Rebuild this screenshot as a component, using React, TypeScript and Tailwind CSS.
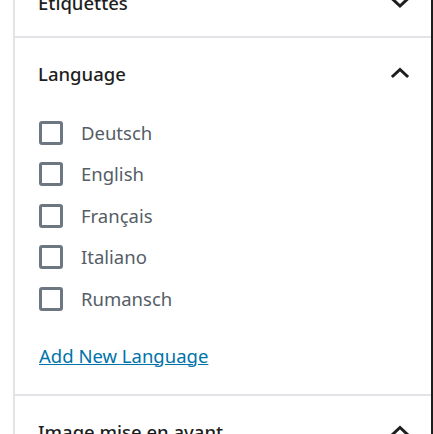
import React, { useState } from 'react';

const font = { fontFamily: '"Noto Sans", "Open Sans", sans-serif' };

const Chevron = ({ up }: { up: boolean }) => (
  <svg width="36" height="36" viewBox="0 0 24 24" fill="none" className="shrink-0 stroke-[#1e1e1e]">
    {up ? (
      <polyline points="6.6,14 12,9 17.4,14" strokeWidth="2" />
    ) : (
      <polyline points="6.6,9 12,14 17.4,9" strokeWidth="2" />
    )}
  </svg>
);

const PanelTitle = ({ title, open, shift = false }: { title: string; open: boolean; shift?: boolean }) => (
  <button
    className={`w-full h-[72px] flex items-center justify-between pl-[23px] pr-[13px] text-left ${shift ? 'pt-[6px]' : ''}`}
  >
    <span className="text-[18.5px] leading-[28px] font-medium text-[#1e1e1e]">{title}</span>
    <Chevron up={open} />
  </button>
);

const languages = ['Deutsch', 'English', 'Français', 'Italiano', 'Rumansch'];

export default function App() {
  const [checked, setChecked] = useState<string[]>([]);

  const toggle = (lang: string) =>
    setChecked(c => (c.includes(lang) ? c.filter(l => l !== lang) : [...c, lang]));

  return (
    <div className="w-[433px] h-[434px] overflow-hidden bg-white" style={font}>
      <div className="ml-[13px] border-l-2 border-r-2 border-l-[#e2e4e7] border-r-[#1e1e1e] min-h-[434px]">
        {/* Étiquettes (collapsed, scrolled off the top) */}
        <div className="-mt-[36px]">
          <PanelTitle title="Étiquettes" open={false} shift />
        </div>

        {/* Language */}
        <div className="border-t-2 border-[#e2e4e7]">
          <PanelTitle title="Language" open={true} />
          <div className="pl-[24px] pr-[13px] pt-[2px] pb-6">
            {languages.map(lang => (
              <label key={lang} className="h-[41.5px] flex items-center cursor-pointer">
                <input
                  type="checkbox"
                  checked={checked.includes(lang)}
                  onChange={() => toggle(lang)}
                  className="appearance-none w-[24px] h-[24px] border-[3px] border-[#6c7781] rounded-[3px] mr-[18px] shrink-0"
                />
                <span className="text-[18.5px] leading-[28px] text-[#555d66]">{lang}</span>
              </label>
            ))}
            <div className="mt-[22px]">
              <a href="#" className="text-[18.5px] leading-[28px] text-[#0073aa] underline">
                Add New Language
              </a>
            </div>
          </div>
        </div>

        {/* Image mise en avant */}
        <div className="border-t-2 border-[#e2e4e7]">
          <PanelTitle title="Image mise en avant" open={true} />
        </div>
      </div>
    </div>
  );
}
